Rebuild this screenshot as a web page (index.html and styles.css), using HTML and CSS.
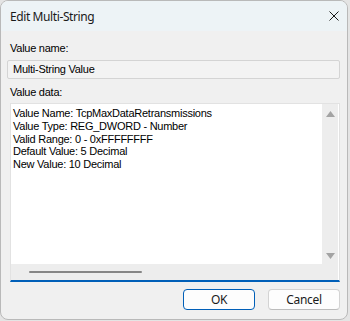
FILE: index.html
```html
<!DOCTYPE html>
<html lang="en">

<head>
  <meta charset="UTF-8">
  <title>Edit Multi-String</title>
  <link rel="stylesheet" href="styles.css">
</head>

<body>
  <div class="dialog">
    <div class="titlebar">
      <span class="title">Edit Multi-String</span>
      <svg class="close" width="10" height="10" viewBox="0 0 10 10">
        <path d="M0.5 0.5 L9.5 9.5 M9.5 0.5 L0.5 9.5" stroke="#1a1a1a" stroke-width="1" fill="none" />
      </svg>
    </div>

    <div class="content">
      <div class="label">Value name:</div>
      <div class="field">Multi-String Value</div>

      <div class="label label-data">Value data:</div>
      <div class="editor">
        <div class="text">Value Name: TcpMaxDataRetransmissions
Value Type: REG_DWORD - Number
Valid Range: 0 - 0xFFFFFFFF
Default Value: 5 Decimal
New Value: 10 Decimal</div>
        <div class="vscroll">
          <svg width="9" height="6" viewBox="0 0 9 6"><path d="M4.5 0 L9 6 L0 6 Z" fill="#a3a3a3" /></svg>
          <svg width="9" height="6" viewBox="0 0 9 6"><path d="M0 0 L9 0 L4.5 6 Z" fill="#a3a3a3" /></svg>
        </div>
        <div class="hscroll"><span class="thumb"></span></div>
        <div class="corner"></div>
      </div>

      <div class="buttons">
        <button type="button" class="btn btn-default">OK</button>
        <button type="button" class="btn">Cancel</button>
      </div>
    </div>
  </div>
</body>

</html>
```

FILE: styles.css
```css
body {
  margin: 0;
  background-color: #e4e4e4;
  width: 350px;
  height: 321px;
  overflow: hidden;
}

.dialog {
  width: 346px;
  height: 318px;
  border: 1px solid #b9b9b9;
  border-radius: 8px;
  background-color: #f0f0f0;
  overflow: hidden;
  display: flex;
  flex-direction: column;
}

.titlebar {
  height: 30px;
  background-color: #edf3f6;
  display: flex;
  align-items: center;
  justify-content: space-between;
  padding: 0 8px 0 9px;
}

.title {
  font-family: "Noto Sans", sans-serif;
  font-size: 12px;
  letter-spacing: -0.4px;
  color: #1a1a1a;
}

.close {
  margin-top: -1px;
}

.content {
  padding: 11px 7px 0 6px;
  font-family: "Liberation Sans", Arial, sans-serif;
  font-size: 11px;
  letter-spacing: -0.25px;
  color: #000;
}

.label {
  line-height: 13px;
  padding-left: 3px;
}

.field {
  margin-top: 5px;
  height: 17px;
  line-height: 17px;
  padding-left: 5px;
  border: 1px solid #d4d4d4;
  border-radius: 2px;
  background-color: #f3f3f3;
}

.label-data {
  margin-top: 7px;
}

.editor {
  margin: 4px 0 0 3px;
  height: 176px;
  border: 1px solid #e2e2e2;
  border-bottom: 2px solid #005fb8;
  display: grid;
  grid-template-columns: 1fr 16px;
  grid-template-rows: 1fr 16px;
  background-color: #fff;
  padding-right: 1px;
}

.text {
  white-space: pre;
  line-height: 12.8px;
  padding: 3px 0 0 2px;
  overflow: hidden;
}

.vscroll {
  background-color: #ededed;
  display: flex;
  flex-direction: column;
  justify-content: space-between;
  align-items: center;
  padding: 7px 0 5px;
}

.hscroll {
  background-color: #ededed;
  display: flex;
  align-items: center;
}

.thumb {
  display: block;
  margin-left: 18px;
  width: 113px;
  height: 2px;
  border-radius: 1px;
  background-color: #858585;
}

.corner {
  background-color: #ededed;
}

.buttons {
  margin-top: 7px;
  display: flex;
  justify-content: flex-end;
  gap: 13px;
}

.btn {
  width: 72px;
  height: 21px;
  padding: 0;
  font-family: "Noto Sans", sans-serif;
  font-size: 12px;
  letter-spacing: -0.3px;
  color: #1a1a1a;
  background-color: #fdfdfd;
  border: 1px solid #d3d3d3;
  border-bottom-color: #bcbcbc;
  border-radius: 4px;
}

.btn-default {
  border: 1px solid #005fb8;
}
```
